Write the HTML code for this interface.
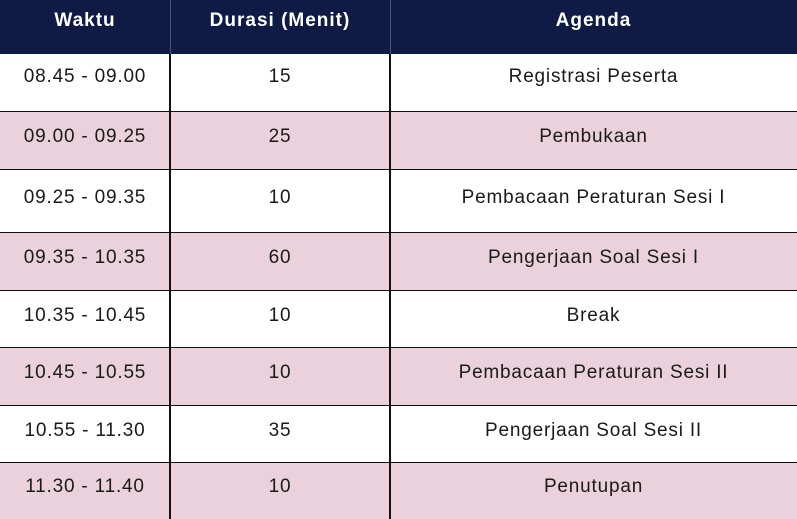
<!DOCTYPE html><html><head><style>
body{margin:0;width:797px;height:518px;overflow:hidden;background:#fff;font-family:"Liberation Sans",sans-serif;color:#1a1a1a;position:relative}
.r{position:absolute;left:0;width:797px;border-top:1.5px solid #111;box-sizing:border-box}
.p{background:#ead1dc}
.c{position:absolute;top:0;text-align:center;font-size:19px;white-space:nowrap;letter-spacing:0.8px}
.v{position:absolute;top:0;bottom:0;width:1.5px;background:#111}
.h{position:absolute;left:0;top:0;width:797px;height:54px;background:#0f1a45;color:#fff;font-weight:bold;font-size:19px;letter-spacing:1px}
.h span{position:absolute;top:10px;text-align:center}
</style></head><body>
<div class="h"><span style="left:0;width:170px">Waktu</span><span style="left:170px;width:220px">Durasi (Menit)</span><span style="left:390px;width:407px">Agenda</span>
<div style="position:absolute;left:170px;top:0;width:1px;height:54px;background:#4a5478"></div><div style="position:absolute;left:390px;top:0;width:1px;height:54px;background:#4a5478"></div></div>
<div id="rows"></div>
<script>
var d=[[54,111,"08.45 - 09.00","15","Registrasi Peserta"],[111,169,"09.00 - 09.25","25","Pembukaan"],[169,232,"09.25 - 09.35","10","Pembacaan Peraturan Sesi I"],[232,290,"09.35 - 10.35","60","Pengerjaan Soal Sesi I"],[290,347,"10.35 - 10.45","10","Break"],[347,405,"10.45 - 10.55","10","Pembacaan Peraturan Sesi II"],[405,462,"10.55 - 11.30","35","Pengerjaan Soal Sesi II"],[462,518,"11.30 - 11.40","10","Penutupan"]];
var h="";d.forEach(function(r,i){var t=r[0],b=r[1],c=(b-t)/2-15;if(i==0)c=(b-t)/2-17;
h+='<div class="r'+(i%2?' p':'')+'" style="top:'+t+'px;height:'+(b-t+1)+'px'+(i==0?';border-top:none':'')+'">'+
'<div class="c" style="left:0;width:170px;top:'+c+'px">'+r[2]+'</div><div class="c" style="left:170px;width:220px;top:'+c+'px">'+r[3]+'</div><div class="c" style="left:390px;width:407px;top:'+c+'px">'+r[4]+'</div>'+
'<div class="v" style="left:169px"></div><div class="v" style="left:389px"></div></div>';});
document.getElementById("rows").innerHTML=h;
</script>
</body></html>
